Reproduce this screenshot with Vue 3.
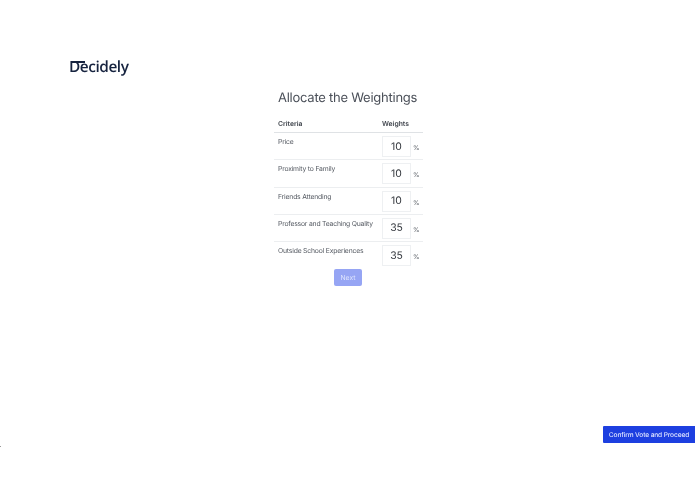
<script setup>
const rows = [
  { name: 'Price', weight: 10 },
  { name: 'Proximity to Family', weight: 10 },
  { name: 'Friends Attending', weight: 10 },
  { name: 'Professor and Teaching Quality', weight: 35 },
  { name: 'Outside School Experiences', weight: 35 },
]
</script>

<template>
  <div class="page">
    <header class="brand">
      <span class="logo">Decidely</span>
    </header>
    <main class="content">
      <h1 class="title">Allocate the Weightings</h1>
      <div class="table">
        <div class="row head">
          <div class="crit">Criteria</div>
          <div class="wt">Weights</div>
        </div>
        <div v-for="r in rows" :key="r.name" class="row item">
          <div class="crit">{{ r.name }}</div>
          <div class="wt">
            <span class="box">{{ r.weight }}</span>
            <span class="pct">%</span>
          </div>
        </div>
      </div>
      <button class="next">Next</button>
    </main>
    <button class="confirm">Confirm Vote and Proceed</button>
    <span class="dot"></span>
  </div>
</template>

<style scoped>
.page {
  position: relative;
  width: 695px;
  height: 494px;
  overflow: hidden;
  background: #fff;
  font-family: Inter, "Liberation Sans", sans-serif;
  color: #4a4f57;
  text-rendering: geometricPrecision;
}
.brand {
  padding: 56px 0 0 69px;
  height: 32px;
}
.logo {
  position: relative;
  display: inline-block;
  font-family: "Open Sans", "Liberation Sans", sans-serif;
  font-size: 15.4px;
  letter-spacing: -0.45px;
  line-height: 21px;
  font-weight: 600;
  color: #16233f;
  will-change: transform;
}
.logo::after {
  content: "";
  position: absolute;
  left: 1.5px;
  top: 5px;
  width: 14px;
  height: 1.5px;
  background: #16233f;
}
.content {
  display: flex;
  flex-direction: column;
  align-items: center;
}
.title {
  margin: 0;
  font-size: 13px;
  line-height: 20px;
  font-weight: 400;
  letter-spacing: -0.25px;
  color: #4b5059;
  will-change: transform;
}
.table {
  width: 149px;
  margin: 10px 0 0 1px;
  will-change: transform;
}
.row {
  display: flex;
  border-bottom: 1px solid #eceef0;
}
.row:last-child {
  border-bottom: 0;
}
.head {
  height: 14px;
  align-items: flex-start;
  border-bottom: 1px solid #dfe2e5;
  font-size: 6.8px;
  line-height: 10px;
  font-weight: 600;
  color: #3f444c;
}
.head .crit { padding-top: 1px; }
.head .wt { padding-top: 1px; }
.item {
  height: 26.3px;
  font-size: 6.8px;
  letter-spacing: -0.19px;
  line-height: 10px;
  color: #555a62;
}
.crit {
  width: 108px;
  padding: 4px 0 0 4px;
  box-sizing: border-box;
}
.wt {
  display: flex;
  align-items: center;
  gap: 2px;
  height: fit-content;
}
.item .wt { padding-top: 3px; }
.box {
  width: 29px;
  height: 21px;
  box-sizing: border-box;
  border: 1px solid #eef0f2;
  display: flex;
  align-items: center;
  justify-content: center;
  font-size: 10.4px;
  letter-spacing: 0;
  color: #33373d;
}
.pct {
  padding-top: 3px;
  font-size: 6.5px;
  letter-spacing: 0;
  color: #4f545c;
}
.next {
  margin-top: 0.5px;
  width: 28px;
  height: 17px;
  padding: 0;
  border: 0;
  border-radius: 2px;
  background: #96a5f4;
  color: #dfe5fd;
  font-family: inherit;
  font-size: 6.8px;
  text-rendering: geometricPrecision;
  will-change: transform;
}
.confirm {
  position: absolute;
  right: 0;
  top: 426px;
  width: 92px;
  height: 17px;
  padding: 0;
  border: 0;
  border-radius: 1px 0 0 1px;
  background: #1d3fe0;
  color: #dfe5ff;
  font-family: inherit;
  font-size: 6.6px;
  font-weight: 500;
  letter-spacing: -0.12px;
  text-rendering: geometricPrecision;
  will-change: transform;
}
.dot {
  position: absolute;
  left: 0;
  top: 446px;
  width: 1px;
  height: 1px;
  background: #9a9a9a;
}
</style>
